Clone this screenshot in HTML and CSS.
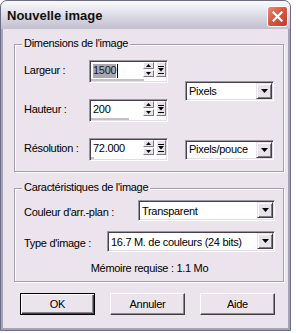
FILE: index.html
```html
<!DOCTYPE html>
<html lang="fr">
<head>
<meta charset="UTF-8">
<title>Nouvelle image</title>
<link rel="stylesheet" href="styles.css">
</head>
<body>
<div class="window">
    <div class="titlebar">
        <span class="title">Nouvelle image</span>
        <span class="close">
            <svg width="11" height="11" viewBox="0 0 11 11"><path d="M1.5 1.5 L9.5 9.5 M9.5 1.5 L1.5 9.5" stroke="#fff" stroke-width="2.2" stroke-linecap="square"/></svg>
        </span>
    </div>
    <div class="client">
        <div class="group dims">
            <span class="legend">Dimensions de l'image</span>

            <span class="label row1">Largeur :</span>
            <div class="spin row1">
                <div class="spin-top">
                    <div class="field"><span class="sel">1500</span><span class="caret"></span></div>
                    <div class="arrows">
                        <span class="arr up"><svg width="5" height="3"><path d="M2.5 0 L5 3 L0 3 Z" fill="#000"/></svg></span>
                        <span class="arr down"><svg width="5" height="3"><path d="M0 0 L5 0 L2.5 3 Z" fill="#000"/></svg></span>
                    </div>
                    <span class="drop"><svg width="6" height="8"><path d="M0 0.5 H6 M0 7.5 H6" stroke="#000"/><path d="M0 2 H6 L3 5.5 Z" fill="#000"/></svg></span>
                </div>
                <div class="track"><span class="bar" style="width: 53px"></span></div>
            </div>
            <div class="select unit">
                <span class="text">Pixels</span>
                <span class="btn"><svg width="7" height="4"><path d="M0 0 H7 L3.5 4 Z" fill="#000"/></svg></span>
            </div>

            <span class="label row2">Hauteur :</span>
            <div class="spin row2">
                <div class="spin-top">
                    <div class="field">200</div>
                    <div class="arrows">
                        <span class="arr up"><svg width="5" height="3"><path d="M2.5 0 L5 3 L0 3 Z" fill="#000"/></svg></span>
                        <span class="arr down"><svg width="5" height="3"><path d="M0 0 L5 0 L2.5 3 Z" fill="#000"/></svg></span>
                    </div>
                    <span class="drop"><svg width="6" height="8"><path d="M0 0.5 H6 M0 7.5 H6" stroke="#000"/><path d="M0 2 H6 L3 5.5 Z" fill="#000"/></svg></span>
                </div>
                <div class="track"><span class="bar" style="width: 38px"></span></div>
            </div>

            <span class="label row3">Résolution :</span>
            <div class="spin row3">
                <div class="spin-top">
                    <div class="field">72.000</div>
                    <div class="arrows">
                        <span class="arr up"><svg width="5" height="3"><path d="M2.5 0 L5 3 L0 3 Z" fill="#000"/></svg></span>
                        <span class="arr down"><svg width="5" height="3"><path d="M0 0 L5 0 L2.5 3 Z" fill="#000"/></svg></span>
                    </div>
                    <span class="drop"><svg width="6" height="8"><path d="M0 0.5 H6 M0 7.5 H6" stroke="#000"/><path d="M0 2 H6 L3 5.5 Z" fill="#000"/></svg></span>
                </div>
                <div class="track"><span class="bar" style="width: 3px"></span></div>
            </div>
            <div class="select res">
                <span class="text">Pixels/pouce</span>
                <span class="btn"><svg width="7" height="4"><path d="M0 0 H7 L3.5 4 Z" fill="#000"/></svg></span>
            </div>
        </div>

        <div class="group props">
            <span class="legend">Caractéristiques de l'image</span>
            <div class="prop-row">
                <span class="label">Couleur d'arr.-plan :</span>
                <div class="select bg">
                    <span class="text">Transparent</span>
                    <span class="btn"><svg width="7" height="4"><path d="M0 0 H7 L3.5 4 Z" fill="#000"/></svg></span>
                </div>
            </div>
            <div class="prop-row">
                <span class="label">Type d'image :</span>
                <div class="select type">
                    <span class="text">16.7 M. de couleurs (24 bits)</span>
                    <span class="btn"><svg width="7" height="4"><path d="M0 0 H7 L3.5 4 Z" fill="#000"/></svg></span>
                </div>
            </div>
            <div class="memory">Mémoire requise : 1.1 Mo</div>
        </div>

        <div class="buttons">
            <button class="default">OK</button>
            <button>Annuler</button>
            <button>Aide</button>
        </div>
    </div>
</div>
</body>
</html>
```

FILE: styles.css
```css
body {
    margin: 0;
    background-color: #ffffff;
    font-family: 'Liberation Sans', Arial, sans-serif;
    font-size: 11px;
    letter-spacing: -0.3px;
    color: #000;
}
.window {
    width: 291px;
    height: 331px;
    box-sizing: border-box;
    display: flex;
    flex-direction: column;
    background-color: #a4a4b8;
    border: 1px solid #6c6c84;
    border-radius: 7px 7px 0 0;
    overflow: hidden;
}
.titlebar {
    height: 28px;
    flex: none;
    display: flex;
    align-items: center;
    justify-content: space-between;
    padding: 0 2px 0 6px;
    background: linear-gradient(#fbfbfd, #e6e6ee 35%, #d2d0dc 70%, #c2c0d0);
}
.title {
    font-size: 13px;
    font-weight: bold;
    letter-spacing: 0;
    color: #111;
    margin-top: 1px;
}
.close {
    width: 19px;
    height: 19px;
    display: flex;
    align-items: center;
    justify-content: center;
    border: 1px solid #fff;
    border-radius: 3px;
    background: linear-gradient(135deg, #ee8a74, #d95a40 45%, #c43c26);
    margin-top: 2px;
}
.client {
    flex: 1;
    margin: 0 2px 2px 2px;
    background-color: #ebe4ec;
    padding: 15px 0 0 11px;
}
.group {
    position: relative;
    width: 270px;
    box-sizing: border-box;
    border: 1px solid #a29eaa;
    box-shadow: inset 1px 1px #fff, 1px 1px #fff;
}
.legend {
    position: absolute;
    top: -8px;
    left: 7px;
    padding: 0 2px;
    background-color: #ebe4ec;
    line-height: 13px;
}
.label {
    line-height: 13px;
    white-space: nowrap;
}
.dims {
    display: grid;
    grid-template-columns: 65px 79px 17px 89px;
    grid-template-rows: 23px 23px 23px;
    row-gap: 16px;
    padding: 15px 8px 10px 9px;
}
.dims .label {
    grid-column: 1;
    align-self: start;
    padding-top: 4px;
}
.dims .spin { grid-column: 2; }
.row1 { grid-row: 1; }
.row2 { grid-row: 2; }
.row3 { grid-row: 3; }
.dims .unit {
    grid-column: 4;
    grid-row: 1 / span 2;
    align-self: center;
}
.dims .res {
    grid-column: 4;
    grid-row: 3;
    align-self: center;
}
.spin {
    width: 79px;
    height: 23px;
    box-sizing: border-box;
    padding: 1px;
    background-color: #fff;
    border: 1px solid;
    border-color: #9a96a2 #fff #fff #9a96a2;
    box-shadow: inset 1px 1px #44424a, inset -1px -1px #e2dce4;
    display: flex;
    flex-direction: column;
}
.spin-top {
    height: 16px;
    display: flex;
}
.field {
    width: 52px;
    padding: 2px 0 0 2px;
    box-sizing: border-box;
    line-height: 13px;
    display: flex;
    align-items: flex-start;
}
.sel {
    background-color: #a9a7b0;
    color: #1a1a1a;
    height: 14px;
}
.caret {
    width: 1px;
    height: 14px;
    background-color: #000;
    margin-left: 1px;
}
.arrows {
    width: 11px;
    display: flex;
    flex-direction: column;
    gap: 1px;
}
.arr, .drop, .btn {
    display: flex;
    align-items: center;
    justify-content: center;
    box-sizing: border-box;
    background-color: #e8e2ea;
    border: 1px solid;
    border-color: #fff #7c7884 #7c7884 #fff;
}
.arr {
    height: 7px;
}
.drop {
    width: 10px;
    height: 15px;
    margin-left: 2px;
}
.track {
    height: 3px;
    padding-top: 1px;
    box-sizing: border-box;
}
.bar {
    display: block;
    height: 2px;
    background-color: #c4c0c8;
}
.select {
    height: 20px;
    box-sizing: border-box;
    padding: 1px;
    background-color: #fff;
    border: 1px solid;
    border-color: #9a96a2 #fff #fff #9a96a2;
    box-shadow: inset 1px 1px #44424a, inset -1px -1px #e2dce4;
    display: flex;
    align-items: center;
}
.select .text {
    flex: 1;
    padding-left: 2px;
    line-height: 13px;
    white-space: nowrap;
}
.select .btn {
    width: 16px;
    height: 16px;
    border-color: #e8e2ea #404040 #404040 #e8e2ea;
    box-shadow: inset 1px 1px #fff, inset -1px -1px #807c88;
}
.props {
    margin-top: 16px;
    padding: 11px 8px 6px 9px;
}
.prop-row {
    display: flex;
    justify-content: space-between;
    align-items: flex-start;
    margin-bottom: 10px;
}
.prop-row .label {
    padding-top: 6px;
}
.props .select {
    height: 21px;
    align-items: flex-start;
}
.props .select .text {
    padding-top: 3px;
}
.props .select .btn {
    margin-top: 0;
}
.select.bg { width: 137px; }
.select.type { width: 168px; }
.memory {
    margin-top: 5px;
    text-align: center;
    line-height: 13px;
}
.buttons {
    display: flex;
    gap: 15px;
    margin-top: 11px;
    padding-left: 6px;
}
button {
    width: 75px;
    height: 22px;
    box-sizing: border-box;
    font-family: 'Liberation Sans', Arial, sans-serif;
    font-size: 11px;
    letter-spacing: -0.3px;
    color: #000;
    background-color: #ebe4ec;
    border: 1px solid;
    border-color: #fff #404040 #404040 #fff;
    box-shadow: inset -1px -1px #8a8692;
    padding: 0;
}
button.default {
    border: 1px solid #000;
    box-shadow: inset 1px 1px #fff, inset -1px -1px #404040, inset -2px -2px #8a8692;
}
```
